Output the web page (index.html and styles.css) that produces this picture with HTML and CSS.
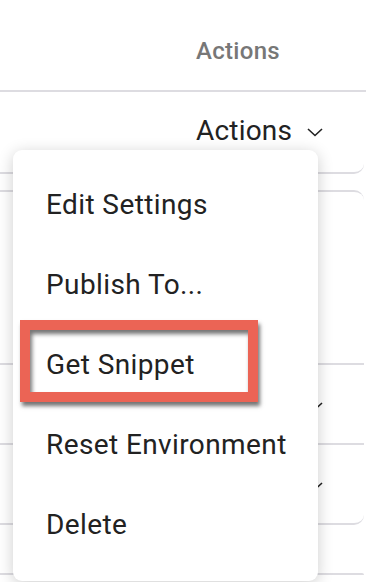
FILE: index.html
```html
<!DOCTYPE html>
<html lang="en">
<head>
  <meta charset="UTF-8">
  <meta name="viewport" content="width=device-width, initial-scale=1.0">
  <title>Environments - Actions</title>
  <link rel="stylesheet" href="styles.css">
</head>
<body>
  <div class="table">
    <div class="table-head">
      <div class="cell"></div>
      <div class="cell head-cell">Actions</div>
    </div>

    <div class="card card-first">
      <div class="row">
        <div class="cell"></div>
        <div class="cell">
          <span class="actions-toggle">Actions
            <svg class="chevron" width="16" height="10" viewBox="0 0 16 10"><polyline points="1,2 8,8.5 15,2" fill="none" stroke="#222" stroke-width="1.6"/></svg>
          </span>
        </div>
      </div>
    </div>

    <div class="card">
      <div class="row row-tall"></div>
      <div class="row">
        <div class="cell"></div>
        <div class="cell">
          <span class="actions-toggle">Actions
            <svg class="chevron" width="16" height="10" viewBox="0 0 16 10"><polyline points="1,2 8,8.5 15,2" fill="none" stroke="#222" stroke-width="1.6"/></svg>
          </span>
        </div>
      </div>
      <div class="row">
        <div class="cell"></div>
        <div class="cell">
          <span class="actions-toggle">Actions
            <svg class="chevron" width="16" height="10" viewBox="0 0 16 10"><polyline points="1,2 8,8.5 15,2" fill="none" stroke="#222" stroke-width="1.6"/></svg>
          </span>
        </div>
      </div>
    </div>

    <div class="card card-next"></div>
  </div>

  <!-- dropdown opened from the first row -->
  <ul class="menu">
    <li class="menu-item">Edit Settings</li>
    <li class="menu-item">Publish To...</li>
    <li class="menu-item">Get Snippet</li>
    <li class="menu-item">Reset Environment</li>
    <li class="menu-item">Delete</li>
    <li class="highlight"></li>
  </ul>
</body>
</html>
```

FILE: styles.css
```css
* {
  margin: 0;
  padding: 0;
  box-sizing: border-box;
}

body {
  font-family: Roboto, "Liberation Sans", sans-serif;
  background: #fff;
  color: #222;
  width: 366px;
  height: 582px;
  overflow: hidden;
  position: relative;
}

.table {
  display: flex;
  flex-direction: column;
}

.table-head,
.row {
  display: grid;
  grid-template-columns: 196px 1fr;
  align-items: center;
}

.table-head {
  height: 92px;
  padding-top: 12px;
  border-bottom: 2px solid #dddce1;
}

.head-cell {
  color: #777;
  font-size: 24px;
  font-weight: 500;
  letter-spacing: 0.3px;
}

.card {
  margin-right: 2px;
  border-top: 2px solid #dddce1;
  border-bottom: 2px solid #dddce1;
  border-top-right-radius: 10px;
  border-bottom-right-radius: 10px;
}

.card-first {
  border-top: none;
  border-top-right-radius: 0;
}

.card-first .row {
  height: 80px;
  padding-bottom: 4px;
}

.card + .card {
  margin-top: 16px;
}

.card .row + .row {
  border-top: 2px solid #dddce1;
}

.row {
  height: 80px;
}

.row-tall {
  height: 171px;
}

.card-next {
  margin-top: 48px !important;
  height: 4px;
  border-bottom: none;
}

.actions-toggle {
  display: inline-flex;
  align-items: center;
  gap: 15px;
  font-size: 28px;
  letter-spacing: 0.2px;
  color: #222;
}

.chevron {
  margin-top: 3px;
}

.menu {
  position: absolute;
  top: 150px;
  left: 13px;
  width: 305px;
  height: 431px;
  padding-top: 14px;
  list-style: none;
  background: #fff;
  border-radius: 9px;
  box-shadow: 0 3px 16px rgba(0, 0, 0, 0.2);
}

.menu-item {
  height: 80px;
  display: flex;
  align-items: center;
  padding-left: 33px;
  font-size: 28px;
  letter-spacing: 0.4px;
  color: #222;
}

/* annotation box around "Get Snippet" */
.highlight {
  position: absolute;
  top: 170px;
  left: 7px;
  width: 238px;
  height: 82px;
  border: 10px solid #eb6455;
  box-shadow: 2px 4px 4px rgba(0, 0, 0, 0.55), inset 2px 4px 4px rgba(0, 0, 0, 0.55);
}
```
